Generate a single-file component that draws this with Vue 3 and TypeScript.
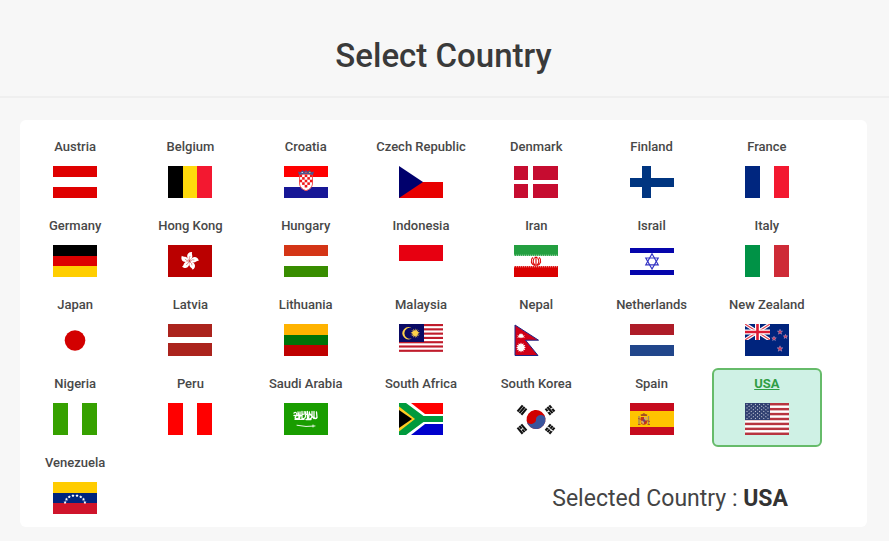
<script setup lang="ts">
import { computed, ref } from 'vue'

interface Country {
  name: string
  flag: string
}

const rect = (x: number, y: number, w: number, h: number, fill: string): string =>
  `<rect x="${x}" y="${y}" width="${w}" height="${h}" fill="${fill}"/>`

// Three horizontal bands, 44 x 32
const bands = (a: string, b: string, c: string): string =>
  rect(0, 0, 44, 11, a) + rect(0, 11, 44, 10, b) + rect(0, 21, 44, 11, c)

// Three vertical bands, 44 x 32
const bars = (a: string, b: string, c: string): string =>
  rect(0, 0, 15, 32, a) + rect(15, 0, 14, 32, b) + rect(29, 0, 15, 32, c)

const star = (cx: number, cy: number, r: number, fill: string, points = 5, inner = 0.4, extra = ''): string => {
  const list: string[] = []
  for (let i = 0; i < points * 2; i++) {
    const radius = i % 2 === 0 ? r : r * inner
    const angle = (Math.PI * i) / points - Math.PI / 2
    list.push(`${(cx + radius * Math.cos(angle)).toFixed(2)},${(cy + radius * Math.sin(angle)).toFixed(2)}`)
  }
  return `<polygon points="${list.join(' ')}" fill="${fill}" ${extra}/>`
}

const stripes = (count: number, height: number, color: string): string => {
  const step = height / count
  let out = rect(0, 0, 44, height, '#ffffff')
  for (let i = 0; i < count; i += 2) out += rect(0, i * step, 44, step, color)
  return out
}

const croatia = (): string => {
  let out = bands('#ff0000', '#ffffff', '#171796')
  out += '<path d="M15.5 8.500H28.500V18Q28 23 22 25Q16 23 15.500 18Z" fill="#ffffff"/>'
  const rows = [[0, 5], [0, 5], [0, 5], [0, 5], [1, 4], [2, 3]]
  rows.forEach(([from, to], r) => {
    for (let c = from; c < to; c++) {
      if ((r + c) % 2 === 0) out += rect(15.5 + c * 2.6, 8.5 + r * 2.6, 2.6, 2.6, '#f01818')
    }
  })
  out += '<path d="M15.500 9V18Q16 22.500 22 24.700Q28 22.500 28.500 18V9" fill="none" stroke="#f03030" stroke-width=".8"/>'
  out += '<path d="M15 9L14 5.500L16.500 6.300L18.500 4.300L20.500 5.800L22 4L23.500 5.800L25.500 4.300L27.500 6.300L30 5.500L29 9Q22 7 15 9Z" fill="#4b568f"/>'
  out += rect(17.5, 6, 1.5, 1, '#b9cfe8') + rect(21.2, 6, 1.5, 1, '#e05050') + rect(25, 6, 1.5, 1, '#e8c24a')
  return out
}

const hongKong = (): string => {
  let out = rect(0, 0, 44, 32, '#ba0000')
  for (let i = 0; i < 5; i++) {
    out += `<g transform="translate(21.500 16) rotate(${i * 72 + 12})"><path d="M0 -.5C-4.800 -3 -4.500 -8.500 .8 -9.300C-.2 -7 4.300 -5 0 -.5Z" fill="#ffffff"/><path d="M0 -1Q-1.500 -3 -.5 -5" fill="none" stroke="#ba0000" stroke-width=".4"/></g>`
  }
  return out
}

const iran = (): string => {
  let out = bands('#239f40', '#ffffff', '#da0000')
  for (let x = 0; x < 44; x += 2) {
    out += rect(x, 9.8, 1.2, 0.8, '#d5f0dc') + rect(x, 21.4, 1.2, 0.8, '#ffe1e1')
  }
  out += '<g fill="none" stroke="#da0000" stroke-width="1.100"><path d="M22 11.500V21M20.500 12.200Q22 13 23.500 12.200"/><path d="M18.800 12.300C16 15 17 19.500 21.300 20.500M25.200 12.300C28 15 27 19.500 22.700 20.500"/><path d="M20.300 13C18.300 16 19 18.800 21.300 20M23.700 13C25.700 16 25 18.800 22.700 20"/></g>'
  return out
}

const israel = (): string =>
  rect(0, 3, 44, 5, '#0505ac') + rect(0, 25, 44, 5, '#0505ac') +
  '<g fill="none" stroke="#3434c4" stroke-width="1.200"><path d="M22 8.800L28.200 19.800H15.800Z"/><path d="M22 24L15.800 13H28.200Z"/></g>'

const malaysia = (): string =>
  stripes(14, 30, '#c01c2c') + rect(0, 0, 25, 18, '#0a0a64') +
  '<path d="M12.800 4.200A6 6 0 1 0 12.800 14.200A5.400 5.400 0 1 1 12.800 4.200Z" fill="#ffd24a"/>' +
  star(16.2, 9.2, 5, '#ffd24a', 14, 0.5)

const nepal = (): string =>
  '<path d="M1 1L24.500 16.200H11.500L24 31.500H1Z" fill="#d00018" stroke="#1c2587" stroke-width="1"/>' +
  '<path d="M3 11.200Q7 17 11 11.200Q7 13.300 3 11.200Z" fill="#ffffff"/>' +
  star(7, 11.7, 2.8, '#ffffff', 8, 0.6) + rect(3, 13.2, 8, 0.6, '#f3a0a0') +
  star(7, 23.5, 5, '#ffffff', 12, 0.65)

const newZealand = (): string => {
  const jack =
    rect(0, 0, 25, 16, '#00247d') +
    '<path d="M0 0L25 16M25 0L0 16" stroke="#ffffff" stroke-width="3.500"/>' +
    '<path d="M0 0L25 16M25 0L0 16" stroke="#e04052" stroke-width="1.200"/>' +
    '<path d="M12.500 0V16M0 8H25" stroke="#ffffff" stroke-width="5"/>' +
    '<path d="M12.500 0V16M0 8H25" stroke="#dc1c34" stroke-width="2.600"/>'
  const outline = 'stroke="#d9c6e4" stroke-width=".4"'
  return rect(0, 0, 44, 32, '#00247d') +
    `<svg width="25" height="16" viewBox="0 0 25 16">${jack}</svg>` +
    star(35, 8, 2.7, '#cc2f50', 5, 0.4, outline) + star(29, 14.6, 2.4, '#cc2f50', 5, 0.4, outline) +
    star(40.5, 12.6, 2.3, '#cc2f50', 5, 0.4, outline) + star(35, 24.8, 3, '#cc2f50', 5, 0.4, outline)
}

const saudi = (): string =>
  rect(0, 0, 44, 32, '#199d00') +
  '<g fill="none" stroke="#ffffff" stroke-linecap="round" stroke-linejoin="round"><path stroke-width="1.300" d="M10 10Q12 8.500 13 11L11 15Q14 16.500 16 14V9M10 12.500H17M14 9L15.500 16M18 8.500V15.500Q20 16.500 21.500 14V9M18.500 11.500Q21 10 24 12M23.500 8.500V15.500M20 9H22M25.500 9L24.500 16Q28 16 28 13V8.500M26 11L30 15.500M30 8.500V14.500Q31.500 16.500 33 14.500L32.500 9M11 16.300H20M22 16.500H27"/><path stroke-width=".9" d="M13 22.300Q22 24.300 31 23M29 22V24"/></g>'

const southAfrica = (): string =>
  rect(0, 0, 44, 32, '#ffffff') +
  '<path d="M12 0H44V11H26Z" fill="#ff0000"/><path d="M12 32H44V21H26Z" fill="#0000cc"/>' +
  '<path d="M0 0H7L24.500 13H44V19H24.500L7 32H0Z" fill="#009a3d"/>' +
  '<path d="M0 3.500L16 16L0 28.500Z" fill="#ffcc22"/><path d="M0 7L13 16L0 25Z" fill="#000000"/>'

const trigram = (x: number, y: number, angle: number, broken: boolean[]): string => {
  let out = `<g transform="translate(${x} ${y}) rotate(${angle})">`
  broken.forEach((split, i) => {
    const top = -3.5 + i * 2.5
    out += rect(-4, top, 8, 2.1, '#111111')
    if (split) out += rect(-0.6, top, 1.2, 2.1, '#ffffff')
  })
  return out + '</g>'
}

const southKorea = (): string =>
  trigram(8, 7, -50, [false, false, false]) + trigram(36, 7, 50, [true, false, true]) +
  trigram(8, 26, 50, [false, true, false]) + trigram(36, 26, -50, [true, true, true]) +
  '<g transform="rotate(-8 22 16.500)"><circle cx="22" cy="16.500" r="9.500" fill="#d00000"/>' +
  '<path d="M12.500 16.500A4.750 3.800 0 0 0 22 16.500A4.750 3.800 0 0 1 31.500 16.500A9.500 9.500 0 0 1 12.500 16.500Z" fill="#39549c"/></g>'

const spain = (): string =>
  rect(0, 0, 44, 32, '#c60b1e') + rect(0, 8, 44, 16, '#ffc400') +
  '<g><path d="M9 13V21M18.500 13V21" stroke="#a4895a" stroke-width="1.400"/><path d="M8 21.500H10.500M17.500 21.500H20M8 15.500L20 18.500" stroke="#be4c21" stroke-width="1"/><path d="M10.800 14H17V19Q17 21.800 13.900 21.800Q10.800 21.800 10.800 19Z" fill="#bd3520"/><path d="M14 14H17V17.500H14ZM11 17.800H14V21Q11 21 11 17.800Z" fill="#d8aa60"/><path d="M11 13L10.500 11.500L12.500 11L13.900 10L15.300 11L17.300 11.500L17 13Z" fill="#a65321"/><circle cx="14" cy="17.500" r="1.200" fill="#684a75"/></g>'

const usa = (): string => {
  let out = stripes(13, 32, '#b8343f') + rect(0, 0, 25, 17, '#2f3f70')
  for (let row = 0; row < 9; row++) {
    const count = row % 2 === 0 ? 6 : 5
    const start = row % 2 === 0 ? 2 : 4.1
    for (let i = 0; i < count; i++) out += star(start + i * 4.2, 1.5 + row * 1.75, 0.9, '#ffffff')
  }
  return out
}

const venezuela = (): string => {
  let out = bands('#ffcc00', '#00247d', '#cf142b')
  for (let i = 0; i < 8; i++) {
    const angle = Math.PI + (Math.PI * (i + 0.35)) / 7.7
    out += star(22 + 10 * Math.cos(angle), 21.5 + 8 * Math.sin(angle), 1.7, '#ffffff', 5, 0.5)
  }
  return out
}

const countries: Country[] = [
  { name: 'Austria', flag: bands('#df0000', '#ffffff', '#df0000') },
  { name: 'Belgium', flag: bars('#000000', '#ffd90c', '#f31830') },
  { name: 'Croatia', flag: croatia() },
  { name: 'Czech Republic', flag: rect(0, 16, 44, 16, '#e80000') + '<path d="M0 0L24 16L0 32Z" fill="#00006c"/>' },
  { name: 'Denmark', flag: rect(0, 0, 14, 14, '#c60c30') + rect(19, 0, 25, 14, '#c60c30') + rect(0, 18, 14, 14, '#c60c30') + rect(19, 18, 25, 14, '#c60c30') },
  { name: 'Finland', flag: rect(0, 12, 44, 9, '#003580') + rect(12, 0, 9, 32, '#003580') },
  { name: 'France', flag: bars('#00267f', '#ffffff', '#f31830') },
  { name: 'Germany', flag: bands('#000000', '#dd0000', '#ffce00') },
  { name: 'Hong Kong', flag: hongKong() },
  { name: 'Hungary', flag: bands('#d43516', '#ffffff', '#388d00') },
  { name: 'Indonesia', flag: rect(0, 0, 44, 16, '#e70011') },
  { name: 'Iran', flag: iran() },
  { name: 'Israil', flag: israel() },
  { name: 'Italy', flag: bars('#009246', '#ffffff', '#ce2b37') },
  { name: 'Japan', flag: '<circle cx="22" cy="16.500" r="10.300" fill="#d30000"/>' },
  { name: 'Latvia', flag: rect(0, 0, 44, 13, '#ab231d') + rect(0, 19, 44, 13, '#ab231d') },
  { name: 'Lithuania', flag: bands('#ffb300', '#007308', '#bf0000') },
  { name: 'Malaysia', flag: malaysia() },
  { name: 'Nepal', flag: nepal() },
  { name: 'Netherlands', flag: bands('#ae1c28', '#ffffff', '#21468b') },
  { name: 'New Zealand', flag: newZealand() },
  { name: 'Nigeria', flag: bars('#36a100', '#ffffff', '#36a100') },
  { name: 'Peru', flag: bars('#ff0000', '#ffffff', '#ff0000') },
  { name: 'Saudi Arabia', flag: saudi() },
  { name: 'South Africa', flag: southAfrica() },
  { name: 'South Korea', flag: southKorea() },
  { name: 'Spain', flag: spain() },
  { name: 'USA', flag: usa() },
  { name: 'Venezuela', flag: venezuela() },
]

const selectedIndex = ref<number>(countries.findIndex((c) => c.name === 'USA'))
const selectedName = computed<string>(() => countries[selectedIndex.value].name)
</script>

<template>
  <div class="page">
    <header class="header">
      <h1 class="title">Select Country</h1>
    </header>
    <main class="card">
      <button
        v-for="(country, index) in countries"
        :key="country.name"
        type="button"
        class="country"
        :class="{ selected: index === selectedIndex }"
        :aria-pressed="index === selectedIndex"
        @click="selectedIndex = index"
      >
        <span class="name">{{ country.name }}</span>
        <svg class="flag" viewBox="0 0 44 32" aria-hidden="true" v-html="country.flag"></svg>
      </button>
      <p class="summary">Selected Country : <strong>{{ selectedName }}</strong></p>
    </main>
  </div>
</template>

<style>
body {
  margin: 0;
  background: #f7f7f7;
}
</style>

<style scoped>
.page {
  box-sizing: border-box;
  min-height: 100vh;
  padding-bottom: 14px;
  background: #f7f7f7;
  color: #3a3a3a;
  font-family: Roboto, "Liberation Sans", sans-serif;
}

.header {
  padding: 36px 22px 20px 20px;
  border-bottom: 2px solid #efefef;
  text-align: center;
}

.title {
  margin: 0;
  font-size: 33px;
  font-weight: 500;
  line-height: 40px;
}

.card {
  display: grid;
  grid-template-columns: repeat(7, minmax(0, 1fr));
  column-gap: 5px;
  margin: 22px 22px 0 20px;
  padding: 11px 45px 1px 0;
  border-radius: 6px;
  background: #ffffff;
}

.country {
  display: flex;
  flex-direction: column;
  align-items: center;
  gap: 10px;
  min-width: 0;
  padding: 5px 0 10px;
  border: 2px solid transparent;
  border-radius: 6px;
  background: transparent;
  color: #484848;
  font: 500 13px/18px Roboto, "Liberation Sans", sans-serif;
  cursor: pointer;
}

.name {
  white-space: nowrap;
}

.flag {
  display: block;
  width: 44px;
  height: 32px;
}

.selected {
  border-color: #66bb6a;
  background: #cff1e5;
}

.selected .name {
  color: #2f9e44;
  font-weight: 700;
  text-decoration: underline;
}

.summary {
  grid-column: 4 / -1;
  justify-self: end;
  align-self: center;
  margin: 0;
  padding: 24px 34px 0 0;
  color: #444444;
  font-size: 23px;
  line-height: 28px;
}

.summary strong {
  color: #333333;
  font-weight: 700;
}
</style>
